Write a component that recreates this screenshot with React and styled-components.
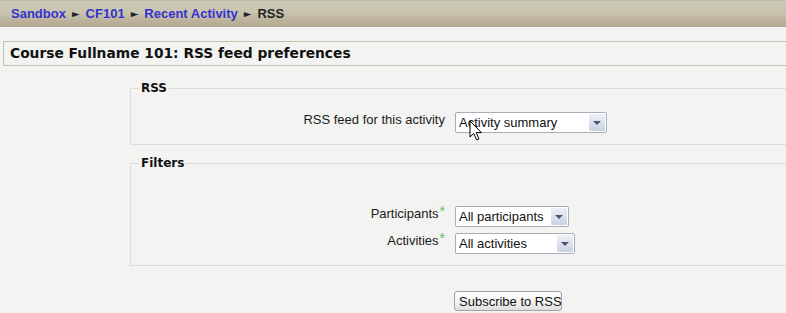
import React from 'react';
import styled, { createGlobalStyle } from 'styled-components';

const GlobalStyle = createGlobalStyle`
  html, body {
    margin: 0;
    padding: 0;
    background: #f3f4f1;
    overflow: hidden;
  }
  body {
    font-family: "Liberation Sans", Arial, sans-serif;
    font-size: 13px;
    color: #1a1a1a;
  }
`;

const Page = styled.div`
  width: 786px;
  height: 313px;
  overflow: hidden;
`;

const Breadcrumb = styled.div`
  height: 26px;
  border-top: 1px solid #bcbaa8;
  background: linear-gradient(to bottom, #cdcbb9 0%, #c8c3ae 45%, #b4a68d 100%);
  padding-left: 11px;
  font-family: "Liberation Sans", Arial, sans-serif;
  font-weight: bold;
  font-size: 13px;
  line-height: 26px;
  display: flex;
  align-items: center;
  gap: 6px;
`;

const Crumb = styled.a`
  color: ${p => (p.$current ? '#222' : '#3333cc')};
  text-decoration: none;
`;

const Sep = styled.span`
  color: #222;
  font-family: "DejaVu Sans", sans-serif;
  font-size: 10px;
`;

const Heading = styled.h2`
  margin: 14px 0 0 3px;
  height: 23px;
  line-height: 23px;
  border: 1px solid #c3bfb1;
  border-right: none;
  padding-left: 6px;
  font-family: "DejaVu Sans", Verdana, sans-serif;
  font-size: 13.8px;
  font-weight: bold;
  color: #111;
`;

const Form = styled.form`
  padding-left: 130px;
`;

const Fieldset = styled.fieldset`
  margin: ${p => p.$top}px 0 0 0;
  padding: ${p => p.$padTop}px 0 11px 0;
  border: 1px solid #dcdcd8;
  border-right: none;
  min-width: 0;
`;

const Legend = styled.legend`
  margin-left: 8px;
  padding: 0 2px;
  font-family: "DejaVu Sans", Verdana, sans-serif;
  font-size: 12px;
  font-weight: bold;
  line-height: 14px;
  color: #111;
`;

const Rows = styled.div`
  display: flex;
  flex-direction: column;
  gap: 6px;
`;

const Row = styled.div`
  display: grid;
  grid-template-columns: 314px auto;
  column-gap: 10px;
  align-items: start;
`;

const Label = styled.label`
  text-align: right;
  line-height: 15px;
  color: #1a1a1a;
`;

const Req = styled.span`
  color: #5dc35d;
  font-size: 14px;
  line-height: 10px;
  vertical-align: 2px;
  margin-left: 1px;
`;

const SelectBox = styled.div`
  position: relative;
  width: ${p => p.$w}px;
  height: 21px;
  box-sizing: border-box;
  border: 1px solid #a7aeb8;
  border-radius: 2px;
  background: #fff;
  display: flex;
  align-items: stretch;
`;

const SelectText = styled.span`
  flex: 1;
  padding-left: 3px;
  line-height: 19px;
  font-size: 13px;
  color: #111;
  white-space: nowrap;
  overflow: hidden;
`;

const Arrow = styled.span`
  width: 16px;
  margin: 1px;
  border-radius: 1px;
  background: linear-gradient(to bottom, #eef0f6 0%, #dde2ee 50%, #c9d0e2 100%);
  display: flex;
  align-items: center;
  justify-content: center;
  &::after {
    content: '';
    border-left: 4px solid transparent;
    border-right: 4px solid transparent;
    border-top: 4px solid #4b5570;
    margin-top: 1px;
  }
`;

const Cursor = styled.svg`
  position: absolute;
  left: 13px;
  top: 7px;
  pointer-events: none;
`;

const Submit = styled.button`
  margin: 25px 0 0 324px;
  width: 108px;
  height: 20px;
  padding: 0 0 0 4px;
  box-sizing: border-box;
  border: 1px solid #a3a3a3;
  border-radius: 3px;
  background: linear-gradient(to bottom, #ffffff 0%, #f1f1f1 60%, #dedede 100%);
  font-family: "Liberation Sans", Arial, sans-serif;
  font-size: 13px;
  color: #111;
  text-align: left;
  white-space: nowrap;
  overflow: hidden;
  display: block;
`;

const Select = ({ width, value, children }) => (
  <SelectBox $w={width}>
    <SelectText>{value}</SelectText>
    <Arrow />
    {children}
  </SelectBox>
);

export default function App() {
  return (
    <Page>
      <GlobalStyle />
      <Breadcrumb>
        <Crumb href="#">Sandbox</Crumb>
        <Sep>►</Sep>
        <Crumb href="#">CF101</Crumb>
        <Sep>►</Sep>
        <Crumb href="#">Recent Activity</Crumb>
        <Sep>►</Sep>
        <Crumb $current>RSS</Crumb>
      </Breadcrumb>

      <Heading>Course Fullname 101: RSS feed preferences</Heading>

      <Form onSubmit={e => e.preventDefault()}>
        <Fieldset $top={15} $padTop={17}>
          <Legend>RSS</Legend>
          <Row>
            <Label>RSS feed for this activity</Label>
            <Select width={152} value="Activity summary">
              <Cursor width="14" height="22" viewBox="0 0 14 22">
                <path
                  d="M1 1 L1 17 L4.8 13.4 L7.6 20 L10 19 L7.2 12.6 L12.4 12.6 Z"
                  fill="#fff"
                  stroke="#000"
                  strokeWidth="1"
                  strokeLinejoin="miter"
                />
              </Cursor>
            </Select>
          </Row>
        </Fieldset>

        <Fieldset $top={11} $padTop={36}>
          <Legend>Filters</Legend>
          <Rows>
            <Row>
              <Label>
                Participants<Req>*</Req>
              </Label>
              <Select width={114} value="All participants" />
            </Row>
            <Row>
              <Label>
                Activities<Req>*</Req>
              </Label>
              <Select width={120} value="All activities" />
            </Row>
          </Rows>
        </Fieldset>

        <Submit type="submit">Subscribe to RSS</Submit>
      </Form>
    </Page>
  );
}
